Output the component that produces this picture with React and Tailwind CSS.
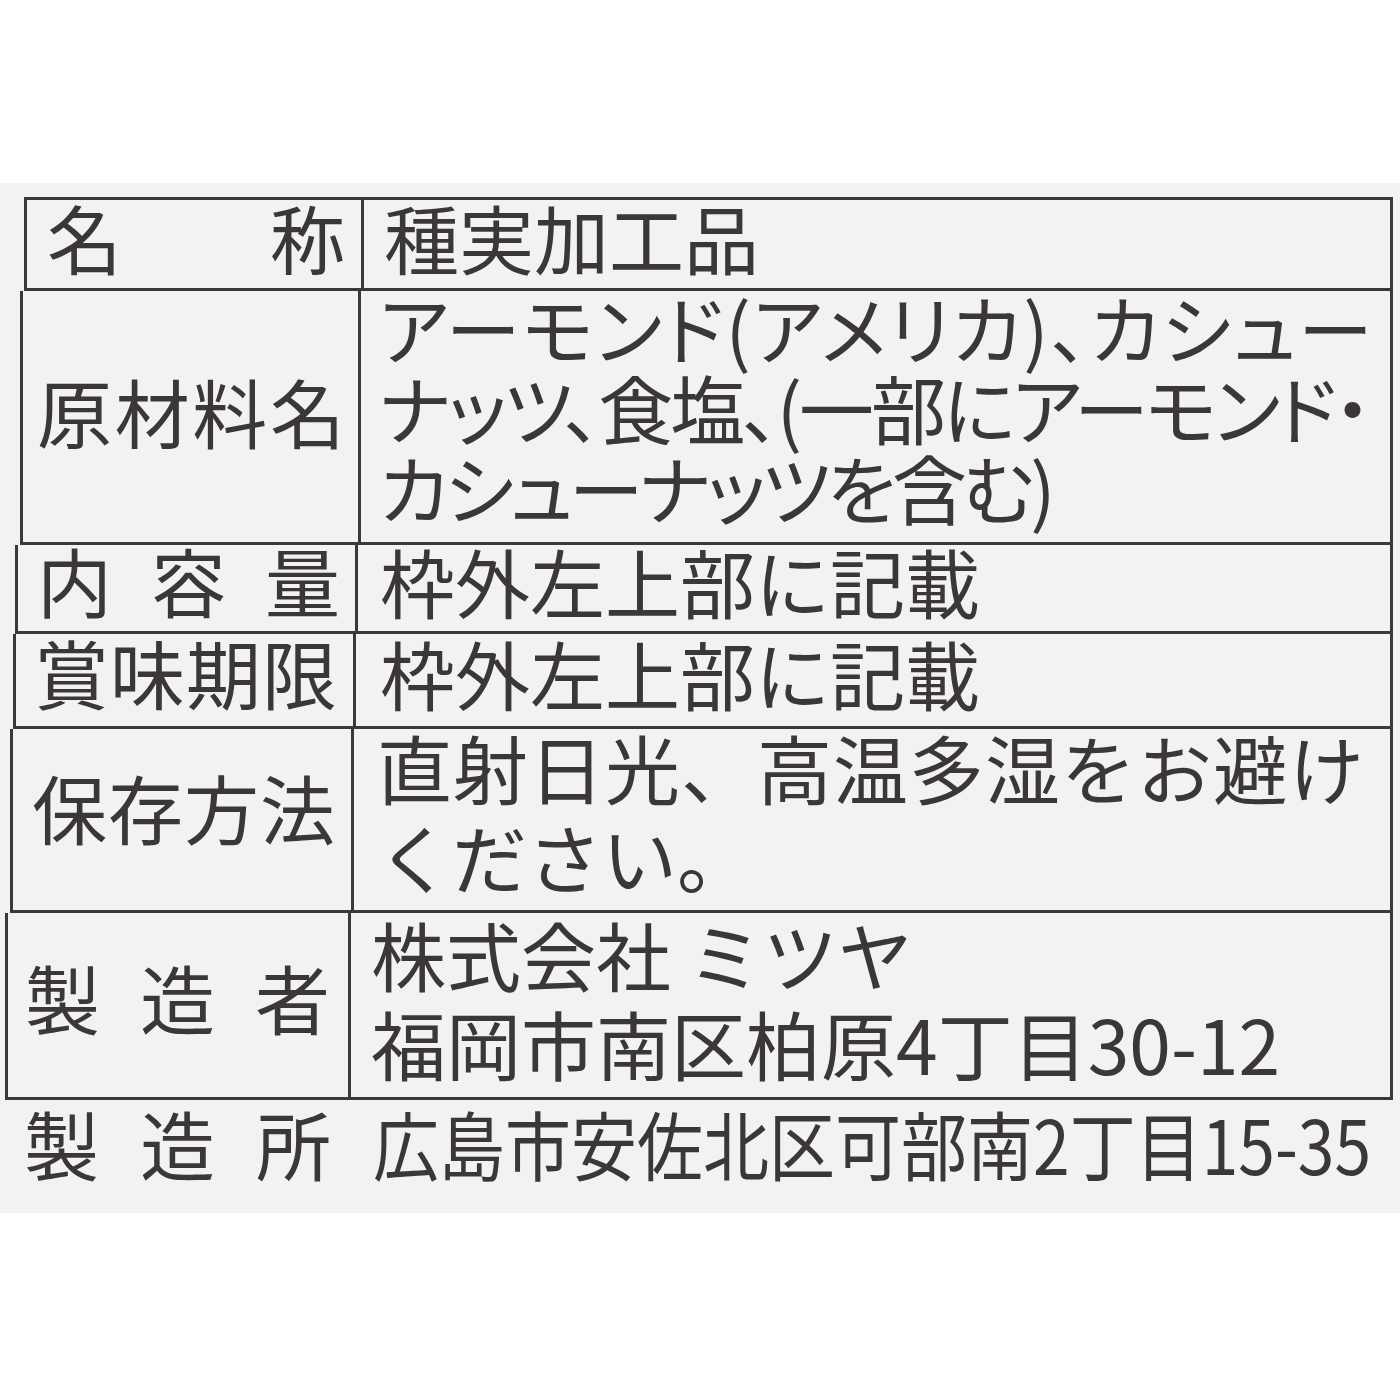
// App.jsx — food label panel (photo of a printed table, left edge leans slightly)

const font = { fontFamily: '"Noto Sans CJK JP", "Noto Sans", sans-serif' };

const Chars = ({ text, className = '' }) => (
  <div className={`flex shrink-0 items-center justify-between border-r-[3px] border-[#3b383b] ${className}`}>
    {text.split('').map((c, i) => (
      <span key={i}>{c}</span>
    ))}
  </div>
);

export default function App() {
  return (
    <div className="w-[1400px] h-[1400px] bg-white text-[#3b3639]" style={font}>
      <div className="h-[183px]" />
      <div className="h-[1030px] bg-[#f2f2f4] pt-[14px]">
        <div className="w-[1393px] text-[75px] leading-none whitespace-nowrap">
          {/* 名称 */}
          <div className="ml-[24px] flex h-[94px] border-[3px] border-[#3b383b]">
            <Chars text="名称" className="w-[337px] pl-[20px] pr-[16px] pb-[16px]" />
            <div className="flex items-center pl-[20px] pb-[16px]">種実加工品</div>
          </div>

          {/* 原材料名 */}
          <div className="ml-[20px] flex h-[254px] border-x-[3px] border-b-[3px] border-[#3b383b]">
            <Chars text="原材料名" className="w-[338px] pl-[14px] pr-[13px] pb-[12px]" />
            <div className="flex flex-col justify-center pl-[18px] pb-[20px] leading-[80px] [font-feature-settings:'palt']">
              <div className="tracking-[2px]">アーモンド(アメリカ)、カシュー</div>
              <div className="tracking-[-3px]">ナッツ、食塩、(一部にアーモンド・</div>
              <div className="tracking-[-4px]">カシューナッツを含む)</div>
            </div>
          </div>

          {/* 内容量 */}
          <div className="ml-[15px] flex h-[89px] border-x-[3px] border-b-[3px] border-[#3b383b]">
            <Chars text="内容量" className="w-[340px] pl-[19px] pr-[15px] pb-[18px]" />
            <div className="flex items-center pl-[22px] pb-[16px]">枠外左上部に記載</div>
          </div>

          {/* 賞味期限 */}
          <div className="ml-[13px] flex h-[95px] border-x-[3px] border-b-[3px] border-[#3b383b]">
            <Chars text="賞味期限" className="w-[340px] pl-[18px] pr-[16px] pb-[17px]" />
            <div className="flex items-center pl-[24px] pb-[16px]">枠外左上部に記載</div>
          </div>

          {/* 保存方法 */}
          <div className="ml-[10px] flex h-[184px] border-x-[3px] border-b-[3px] border-[#3b383b]">
            <Chars text="保存方法" className="w-[341px] pl-[19px] pr-[16px] pb-[27px]" />
            <div className="flex flex-col justify-center pl-[23px] pb-[17px] leading-[89px]">
              <div className="tracking-[1px]">直射日光、高温多湿をお避け</div>
              <div>ください。</div>
            </div>
          </div>

          {/* 製造者 */}
          <div className="ml-[5px] flex h-[187px] border-x-[3px] border-b-[3px] border-[#3b383b]">
            <Chars text="製造者" className="w-[343px] pl-[17px] pr-[18px] pb-[17px]" />
            <div className="flex flex-col justify-center pl-[20px] pb-[15px] leading-[89px]">
              <div>株式会社 ミツヤ</div>
              <div>福岡市南区柏原4丁目30-12</div>
            </div>
          </div>
        </div>

        {/* 製造所 */}
        <div className="flex h-[113px] items-center pb-[28px] text-[75px] leading-none whitespace-nowrap">
          <div className="flex w-[373px] shrink-0 justify-between pl-[24px] pr-[42px]">
            <span>製</span>
            <span>造</span>
            <span>所</span>
          </div>
          <div className="origin-left scale-x-[0.88]">広島市安佐北区可部南2丁目15-35</div>
        </div>
      </div>
    </div>
  );
}
